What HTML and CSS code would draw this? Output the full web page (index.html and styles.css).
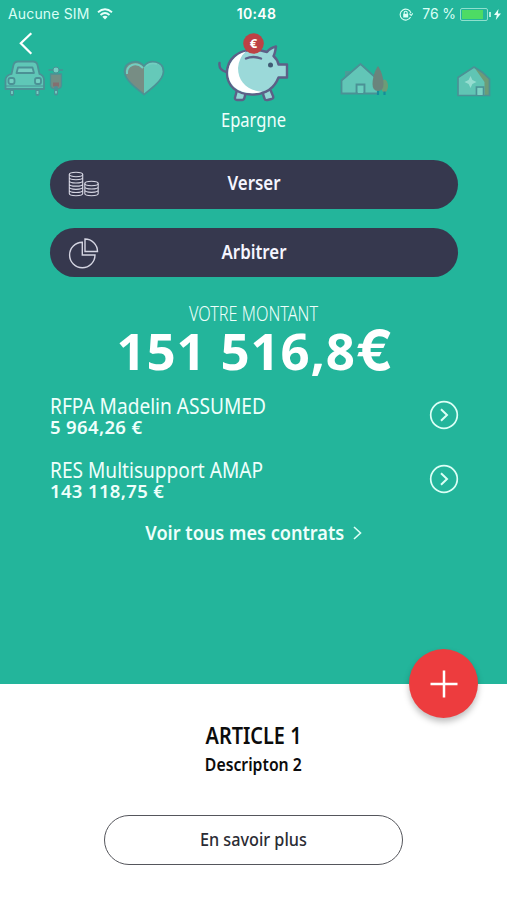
FILE: index.html
```
<!DOCTYPE html>
<html lang="fr">
<head>
<meta charset="utf-8">
<title>Epargne</title>
<link rel="stylesheet" href="styles.css">
</head>
<body>
<main class="hero">
  <div class="status">
    <div class="status-left">
      <span>Aucune SIM</span>
      <svg width="16" height="12" viewBox="0 0 16 12" fill="none" stroke="#e9fffa" stroke-width="1.9"><path d="M1 4.2Q8-1.6 15 4.2M3.5 6.9Q8 3.2 12.5 6.9"/><path d="M5.3 8.7Q8 6.6 10.7 8.7L8 11.5Z" fill="#e9fffa" stroke="none"/></svg>
    </div>
    <div class="status-time">10:48</div>
    <div class="status-right">
      <svg width="14" height="13" viewBox="0 0 14 13" fill="none" stroke="#d9fff5" stroke-width="1.1"><path d="M11.6 9.1A5.5 5.5 0 1 1 12 5.2M10.4 5.6L12.2 7.5 13.8 5.4"/><path d="M5.2 6V4.8a1.5 1.5 0 0 1 3 0V6"/><path d="M4.2 5.8h5v3.7h-5z" fill="#d9fff5" stroke="none"/></svg>
      <span class="percent">76 %</span>
      <span class="battery"><i class="level"></i></span><i class="battery-cap"></i>
      <svg class="bolt" width="7" height="11" viewBox="0 0 7 11"><path d="M4.5 0L0 6h2.8L1.8 11 7 4.6H3.9Z" fill="#e9fffa"/></svg>
    </div>
  </div>

  <nav class="carousel">
    <svg class="back" width="14" height="23" viewBox="0 0 14 23" fill="none" stroke="#fff" stroke-width="2.2"><path d="M12.3 1.2L1.8 11.3 12.3 21.8"/></svg>
    <svg class="item car" width="60" height="38" viewBox="0 0 60 38" fill="#5fc7b7" stroke="#4b9195" stroke-width="1.8" stroke-linejoin="round">
      <path d="M8 30v4M33.500 30v4" stroke-width="4" stroke-linecap="round"/><path d="M8 31v3M33.500 31v3" stroke="#74cfc2"/>
      <path d="M7.500 14L9.500 5Q10.500 1.500 14 1.500h15Q32.500 1.500 33.500 5l2 9Q40 15.500 40 20v9H1.500V20Q1.500 15.500 7.500 14Z"/>
      <path d="M1.500 26h38.500" fill="none" stroke-width="1.200"/>
      <path d="M14 7.500h14.500l1.500 5.500H12.500Z" fill="#74cfc2"/>
      <rect x="4.500" y="18" width="6" height="6" rx="2" fill="#74cfc2"/><rect x="31" y="18" width="6" height="6" rx="2" fill="#74cfc2"/>
      <path d="M46.500 14h11v11q0 4-5.500 4t-5.500-4Z" fill="#728e85" stroke-width="1.300"/><path d="M49 22.500h6v4h-6z" fill="#846f70" stroke="none"/>
      <path d="M44.500 10h14.500" fill="none" stroke-width="1.500"/><circle cx="52" cy="10" r="3" fill="#74cfc2" stroke-width="1"/>
      <path d="M52 28v5.500" stroke-width="4" stroke-linecap="round"/><path d="M52 31v2.500" stroke="#74cfc2"/>
    </svg>
    <svg class="item heart" width="42" height="37" viewBox="0 0 42 37">
      <path d="M21 34.500C14 29 2 20 2 11.500 2 1 15-1 21 6.500Z" fill="#778d84"/><path d="M21 34.500C28 29 40 20 40 11.500 40 1 27-1 21 6.500Z" fill="#65c9b9"/>
      <path d="M4 14C3 5 13 1 20 8M23 6q5-4 11-2" fill="none" stroke="#72cfc1" stroke-width="2"/>
      <path d="M21 34.500C14 29 1.500 20 1.500 11.500 1.500 1 15-1.500 21 6 27-1.500 40.500 1 40.500 11.500 40.500 20 28 29 21 34.500Z" fill="none" stroke="#4b9195" stroke-width="1.700"/>
    </svg>
    <svg class="item pig" width="72" height="72" viewBox="0 0 72 72" stroke="#5d6087" stroke-width="2.400" stroke-linejoin="round">
      <path d="M19 58l-2 7.500q-.3 2.500 2 2.500h5q2 0 2.500-2.500l1-4M45 62l1.500 4.500q.5 2 3 1.500l4-1q2.500-.5 1.500-3L52.500 58" fill="#94d8d5"/>
      <path d="M1.500 31q-1 7 7 9" fill="none" stroke-linecap="round"/>
      <path d="M9 41C9 27 20 18 35 18q8 0 14 2 3-4 9-5.500-1 7-2.500 9.500 4 3.500 5 8.500H69v13h-8.500C56 57 47 62.500 34 62.500 19 62.500 9 54 9 41Z" fill="#9bd9d9"/>
      <path d="M28 19.500C16 23 10.300 32 10.300 41c0 12 10 20 24 20.200q6 0 10-1.500C30 59 20 50 20 36q1-11 8-16.500Z" fill="#fff" stroke="none"/>
      <path d="M28 26.500q7-3 15 0" fill="none" stroke-linecap="round"/><circle cx="52.500" cy="33" r="2.500" fill="#3f5b73" stroke="none"/>
      <circle cx="35.500" cy="11.500" r="10.300" fill="#bd4145" stroke="none"/><text x="35.500" y="16.200" text-anchor="middle" class="euro">€</text>
    </svg>
    <svg class="item house" width="50" height="36" viewBox="0 0 50 36">
      <path d="M6 17V9h5v4" fill="#4a9c96"/>
      <path d="M3 31.500V18.500L21.500 2 38 17v14.500Z" fill="#62c6b7"/>
      <path d="M38 31.500H2.500V18.500L21.500 2 37 16M17.500 31V22.500h8V31" fill="none" stroke="#4b9195" stroke-width="1.800"/><path d="M19 24h5v7h-5z" fill="#6acfbe"/>
      <ellipse cx="45.500" cy="24" rx="3.500" ry="6.500" fill="#6d9c77"/><path d="M39 4C36 8 33.500 16 33.500 22q0 7 5.500 7t5.500-7C44.500 16 42 8 39 4Z" fill="#6a847c"/>
      <path d="M39 29v4M45.500 29.500v3.500" stroke="#148d9b" stroke-width="2.200"/>
    </svg>
    <svg class="item clinic" width="36" height="33" viewBox="0 0 36 33">
      <path d="M2 30.500V13L18 2l9 6 6.500 8v14.500Z" fill="#60c5b4"/><path d="M18 2l8 5 7.500 7.500v16h-5V17Z" fill="#6d9c77"/>
      <path d="M2 30.500V12.500L18 2l8 5 7.500 7v16.500ZM20.500 30v-8h7v8" fill="none" stroke="#4b9195" stroke-width="1.700"/><path d="M21.500 23h5V30h-5z" fill="#7ed2c4"/>
      <path d="M14.500 11l1.900 4.100 4.100 1.900-4.100 1.900-1.900 4.100-1.900-4.100L8.500 17l4.100-1.900Z" fill="#95ddd0"/>
    </svg>
  </nav>
  <h1 class="title">Epargne</h1>

  <div class="actions">
    <button class="pill"><svg width="32" height="26" viewBox="0 0 32 26" fill="none" stroke="#d5d5e2" stroke-width="1.100"><ellipse cx="8" cy="3.500" rx="6.700" ry="2.200"/><path d="M1.300 3.500v19c0 3 13.400 3 13.400 0v-19M1.300 6.500c0 3 13.400 3 13.400 0M1.300 9.700c0 3 13.400 3 13.400 0M1.300 12.900c0 3 13.400 3 13.400 0M1.300 16.100c0 3 13.400 3 13.400 0M1.300 19.300c0 3 13.400 3 13.400 0"/><ellipse cx="23.500" cy="12.500" rx="6.700" ry="2.200"/><path d="M16.800 12.500v10c0 3 13.400 3 13.400 0v-10M16.800 15.800c0 3 13.400 3 13.400 0M16.800 19.100c0 3 13.400 3 13.400 0"/></svg><span>Verser</span></button>
    <button class="pill"><svg width="32" height="32" viewBox="0 0 32 32" fill="none" stroke="#d5d5e2" stroke-width="1.400"><path d="M14.300 5.300A12.700 12.700 0 1 0 27 18H14.300Z"/><path d="M17 2A12.500 12.500 0 0 1 29.500 14.500H17Z"/></svg><span>Arbitrer</span></button>
  </div>

  <p class="caption">VOTRE MONTANT</p>
  <p class="amount">151 516,8<span class="unit">€</span></p>

  <ul class="contracts">
    <li class="contract">
      <div><div class="name">RFPA Madelin ASSUMED</div><div class="value">5 964,26 €</div></div>
      <svg width="30" height="30" viewBox="0 0 30 30" fill="none" stroke="#dcfff6"><circle cx="15" cy="15" r="13.300" stroke-width="1.700"/><path d="M12 9.200l6 5.800-6 5.800" stroke-width="2"/></svg>
    </li>
    <li class="contract">
      <div><div class="name">RES Multisupport AMAP</div><div class="value">143 118,75 €</div></div>
      <svg width="30" height="30" viewBox="0 0 30 30" fill="none" stroke="#dcfff6"><circle cx="15" cy="15" r="13.300" stroke-width="1.700"/><path d="M12 9.200l6 5.800-6 5.800" stroke-width="2"/></svg>
    </li>
  </ul>
  <a class="all"><span>Voir tous mes contrats</span><svg width="9" height="14" viewBox="0 0 9 14" fill="none" stroke="#dcfff6" stroke-width="1.600"><path d="M1 1l6.500 6L1 13"/></svg></a>
  <button class="fab"><svg width="28" height="28" viewBox="0 0 28 28" stroke="#fff" stroke-width="2.500"><path d="M14 .5v27M.5 14h27"/></svg></button>
</main>
<section class="article">
  <h2>ARTICLE 1</h2>
  <p>Descripton 2</p>
  <button class="more"><span>En savoir plus</span></button>
</section>
</body>
</html>
```
FILE: styles.css
```
* { box-sizing: border-box; margin: 0; padding: 0; }
body {
  width: 507px; height: 900px; overflow: hidden; background: #fff; color: #effffb;
  font-family: "Noto Sans", "Open Sans", sans-serif;
}
svg { display: block; flex: none; }
button { font: inherit; border: 0; }
.hero { position: relative; height: 684px; background: #23b59b; }

.status {
  display: grid; grid-template-columns: 1fr auto 1fr; align-items: center; height: 28px;
  padding: 0 6px 0 8px; font: 400 14px/28px Inter, sans-serif; color: #d9fff5;
}
.status-left, .status-right { display: flex; align-items: center; }
.status-left { gap: 8px; letter-spacing: .15px; }
.status-time { padding-left: 4px; font-weight: 600; color: #fff; letter-spacing: .35px; }
.status-right { justify-content: flex-end; }
.percent { margin: 0 4px 0 9px; letter-spacing: -.1px; }
.battery { width: 28px; height: 13px; padding: 1px; border: 1px solid #8fe0cd; border-radius: 2px; }
.level { display: block; width: 21px; height: 9px; background: #4ddb64; }
.battery-cap { width: 2px; height: 5px; margin-left: 1px; background: #b6eee1; }
.bolt { margin-left: 3px; }

.carousel { position: relative; display: flex; align-items: flex-start; height: 80px; padding-left: 4px; }
.back { position: absolute; left: 19px; top: 4px; }
.car { margin-top: 32px; }
.heart { margin: 32px 0 0 59px; }
.pig { margin: 4px 0 0 53px; }
.house { margin: 34px 0 0 49px; }
.clinic { margin: 37px 0 0 67px; }
.euro { font: 700 13px "Noto Sans", sans-serif; fill: #fff; stroke: none; }

/* The narrow humanist look comes from condensing the regular cut. */
.title { text-align: center; font-size: 19.5px; line-height: 24px; font-weight: 400; transform: scaleX(.848); }
.actions { display: flex; flex-direction: column; gap: 19.5px; padding: 28px 49px 0 50px; }
.pill {
  display: grid; grid-template-columns: 32px 1fr 32px; align-items: center; height: 48.7px; padding: 0 18px;
  border-radius: 25px; background: #36384e; color: #f5f5ff; font-size: 19px; line-height: 24px; font-weight: 600;
}
.pill span { transform: translateY(-1px) scaleX(.888); }
.caption { margin-top: 25px; text-align: center; font-size: 19.5px; line-height: 24px; font-weight: 300; transform: scaleX(.832); }
.amount { margin-top: -1px; padding-left: 3px; text-align: center; font-size: 51px; line-height: 50px; font-weight: 700; letter-spacing: .8px; color: #fff; }
.unit { font-family: Inter, sans-serif; font-size: 55px; line-height: 0; letter-spacing: 0; }
.contracts { display: flex; flex-direction: column; gap: 21px; padding: 19px 48px 0 50px; list-style: none; }
.contract { display: flex; align-items: center; justify-content: space-between; height: 43px; }
.name { font-size: 21.5px; line-height: 24px; transform: scaleX(.889); transform-origin: left; }
.value { margin-top: -1px; font-size: 18.5px; line-height: 20px; font-weight: 600; letter-spacing: .35px; }
.all { display: flex; align-items: center; justify-content: center; gap: 8px; margin-top: 20px; font-size: 20px; line-height: 24px; font-weight: 600; }
.all span { margin: 0 -10px; transform: scaleX(.906); }
.fab {
  position: absolute; right: 29px; bottom: -34px; display: grid; place-items: center; width: 69px; height: 69px;
  border-radius: 50%; background: #ed3c3e; box-shadow: 0 4px 6px rgba(0, 0, 0, .25);
}
.article { display: flex; flex-direction: column; align-items: center; padding-top: 37px; color: #0c0c0c; }
.article h2 { font-size: 23px; line-height: 28px; font-weight: 600; transform: scaleX(.864); }
.article p { margin-top: 5px; font-size: 18px; line-height: 20px; font-weight: 600; transform: scaleX(.876); }
.more { width: 299px; height: 50px; margin-top: 41px; border: 1.5px solid #55565c; border-radius: 25px; background: #fff; color: #2b2c34; font-size: 18px; line-height: 24px; font-weight: 500; }
.more span { display: inline-block; transform: translateY(-1px) scaleX(.901); }
```
